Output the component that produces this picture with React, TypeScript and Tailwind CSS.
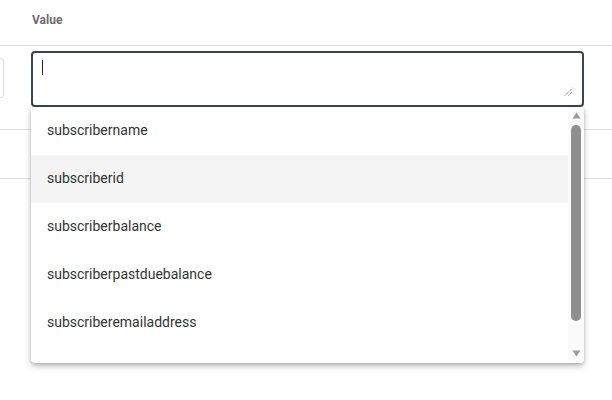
import React from 'react';

const options = [
  'subscribername',
  'subscriberid',
  'subscriberbalance',
  'subscriberpastduebalance',
  'subscriberemailaddress',
];

export default function App() {
  return (
    <div className="relative w-[612px] h-[400px] overflow-hidden bg-white font-['Roboto','Liberation_Sans',sans-serif]">
      {/* header */}
      <div className="h-[46px] border-b border-[#e0e0e0] pl-[32px] pt-[7px]">
        <span className="text-[12px] font-bold leading-[16px] text-[#6b6b6b]">Value</span>
      </div>

      {/* first row with the value editor */}
      <div className="flex h-[84px] border-b border-[#e0e0e0]">
        <div className="mt-[12px] h-[40px] w-[4px] rounded-r-[4px] border border-l-0 border-[#dcdcdc]" />
        <div className="relative ml-[27px] mt-[5px] h-[56px] w-[553px]">
          <textarea
            className="block h-full w-full resize-none rounded-[4px] border-2 border-[#37474f] bg-white px-[10px] py-[7px] text-[14px] text-[#333] outline-none"
            defaultValue=""
          />
          <div className="absolute left-[11px] top-[9px] h-[15px] w-[1px] bg-[#222]" />
          <svg className="absolute right-[11px] bottom-[11px]" width="9" height="9" viewBox="0 0 9 9">
            <path d="M1 8.5 L8.5 1 M4.5 8.5 L8.5 4.5" stroke="#555" strokeWidth="0.9" strokeDasharray="1.2 0.8" />
          </svg>
        </div>
      </div>

      {/* second row */}
      <div className="h-[49px] border-b border-[#e0e0e0]" />

      {/* autocomplete dropdown */}
      <div className="absolute left-[31px] top-[107px] flex h-[256px] w-[553px] overflow-hidden rounded-b-[4px] bg-white shadow-[0_3px_6px_rgba(0,0,0,0.25),0_1px_3px_rgba(0,0,0,0.15)]">
        <ul className="flex-1">
          {options.map((o, i) => (
            <li
              key={o}
              className={`flex h-[48px] items-center pl-[16px] pb-[1px] text-[14px] text-[#333] ${i === 1 ? 'bg-[#f4f4f4]' : ''}`}
            >
              {o}
            </li>
          ))}
        </ul>
        <div className="relative w-[16px] shrink-0 bg-[#fbfbfb]">
          <svg className="absolute left-[4px] top-[5px]" width="9" height="7" viewBox="0 0 9 7">
            <path d="M4.5 0.5 L8.5 6.5 L0.5 6.5 Z" fill="#9a9a9a" />
          </svg>
          <div className="absolute left-[3px] top-[18px] h-[196px] w-[10px] rounded-full bg-[#8f8f8f]" />
          <svg className="absolute left-[4px] bottom-[6px]" width="9" height="7" viewBox="0 0 9 7">
            <path d="M0.5 0.5 L8.5 0.5 L4.5 6.5 Z" fill="#9a9a9a" />
          </svg>
        </div>
      </div>
    </div>
  );
}
